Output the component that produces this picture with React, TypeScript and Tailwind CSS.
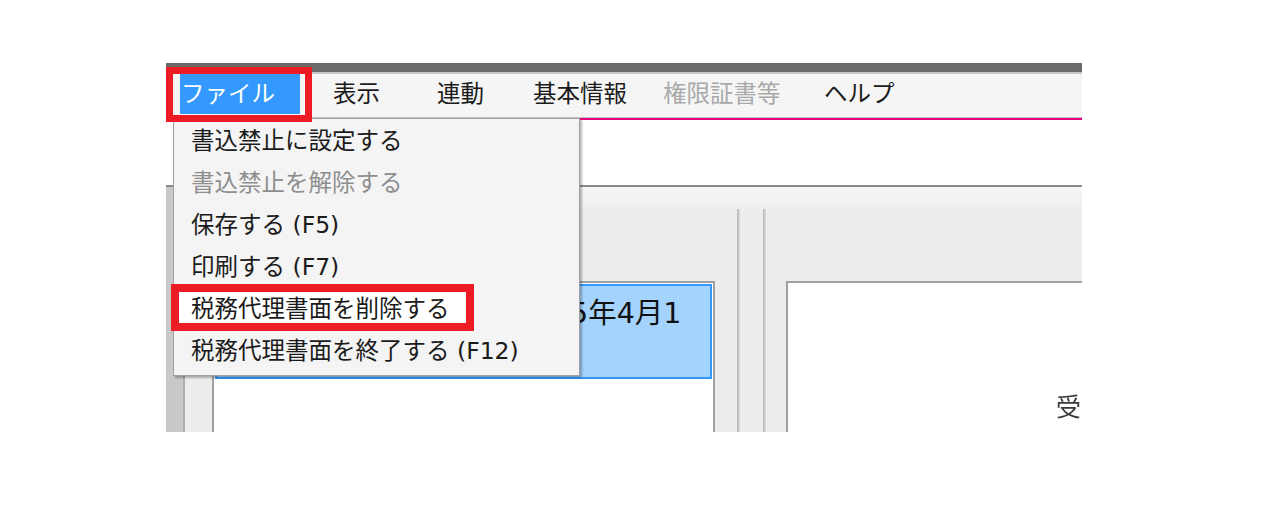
import React from 'react'

const menuBar = [
  { label: '表示', w: 'w-[104px]', disabled: false },
  { label: '連動', w: 'w-[96px]', disabled: false },
  { label: '基本情報', w: 'w-[130px]', disabled: false },
  { label: '権限証書等', w: 'w-[161px]', disabled: true },
  { label: 'ヘルプ', w: 'w-[100px]', disabled: false },
]

const fileItems = [
  { label: '書込禁止に設定する', disabled: false, marked: false },
  { label: '書込禁止を解除する', disabled: true, marked: false },
  { label: '保存する (F5)', disabled: false, marked: false },
  { label: '印刷する (F7)', disabled: false, marked: false },
  { label: '税務代理書面を削除する', disabled: false, marked: true },
  { label: '税務代理書面を終了する (F12)', disabled: false, marked: false },
]

function FileMenu() {
  return (
    <div className="absolute left-[7px] top-[55px] w-[407px] h-[258px] bg-[#f4f4f4] border border-[#a0a0a0] shadow-[2px_2px_2px_rgba(0,0,0,0.28)] z-20">
      {fileItems.map((item, i) => (
        <div key={i} className="relative h-[42px] flex items-center pl-[17px] pt-[4px]">
          {item.marked && (
            <div className="absolute left-[-3px] top-[-3px] w-[303px] h-[47px] border-[8px] border-[#ed1c24] bg-white" />
          )}
          <span
            className={
              'relative text-[23.5px] leading-none whitespace-pre ' +
              (item.disabled ? 'text-[#8e8e8e]' : 'text-[#1b1b1b]')
            }
          >
            {item.label}
          </span>
        </div>
      ))}
    </div>
  )
}

export default function App() {
  return (
    <div className="w-[1266px] h-[512px] bg-white pt-[63px] pl-[166px] font-['DejaVu_Sans','Noto_Sans_CJK_JP',sans-serif]">
      <div className="relative w-[916px] h-[369px] overflow-hidden">
        {/* title strip */}
        <div className="h-[9px] bg-[#6a6a6a]" />
        <div className="h-[2px] bg-[#c8c8c8]" />

        {/* menu bar */}
        <div className="h-[44px] bg-[#f5f5f5] border-b border-[#c3c3c3] flex items-start">
          <div className="shrink-0 ml-[14px] w-[120px] h-[40px] bg-[#3399ff] flex items-center pl-[1px] pt-[2px]">
            <span className="text-[23.5px] leading-none text-white">ファイル</span>
          </div>
          <div className="shrink-0 w-[33px]" />
          {menuBar.map((m) => (
            <div key={m.label} className={m.w + ' shrink-0 h-[40px] flex items-center pt-[2px]'}>
              <span
                className={
                  'text-[23.5px] leading-none ' + (m.disabled ? 'text-[#a9a9a9]' : 'text-[#1b1b1b]')
                }
              >
                {m.label}
              </span>
            </div>
          ))}
        </div>

        {/* toolbar strip */}
        <div className="h-[69px] bg-white border-t-2 border-t-[#e4007f] border-b-2 border-b-[#8a8a8a]" />

        {/* work area */}
        <div className="h-[245px] flex bg-[linear-gradient(to_bottom,#f7f7f7,#ededed_24px)]">
          <div className="shrink-0 w-[17px] bg-[#c9c9c9]" />

          {/* left pane */}
          <div className="shrink-0 w-[554px] border-l-2 border-[#adadad] pt-[94px] pl-[27px] pr-[22px]">
            <div className="h-[220px] border-2 border-[#a0a0a0] bg-white pt-[1px] pl-[1px] pr-[1px]">
              <div className="h-[95px] border-2 border-[#3399ff] bg-[#a4d4fe] pl-[296px] pt-[10px] overflow-hidden">
                <span className="text-[28.5px] leading-[36px] text-[#111] whitespace-nowrap">令和5年4月1</span>
              </div>
            </div>
          </div>

          {/* splitters */}
          <div className="shrink-0 mt-[22px] w-[3px] bg-[linear-gradient(to_right,#b4b4b4,#dedede)]" />
          <div className="shrink-0 w-[23px]" />
          <div className="shrink-0 mt-[22px] w-[3px] bg-[linear-gradient(to_right,#b4b4b4,#dedede)]" />

          {/* right pane */}
          <div className="flex-1 min-w-0 pt-[94px] pl-[20px]">
            <div className="w-[320px] h-[220px] border-2 border-[#a0a0a0] bg-white pl-[268px] pt-[112px]">
              <span className="text-[25px] leading-none text-[#3a3a3a] blur-[0.7px]">受</span>
            </div>
          </div>
        </div>

        <FileMenu />

        {/* annotation on the file menu */}
        <div className="absolute left-0 top-[4px] w-[146px] h-[55px] border-[7px] border-[#ed1c24] z-30" />
      </div>
    </div>
  )
}
